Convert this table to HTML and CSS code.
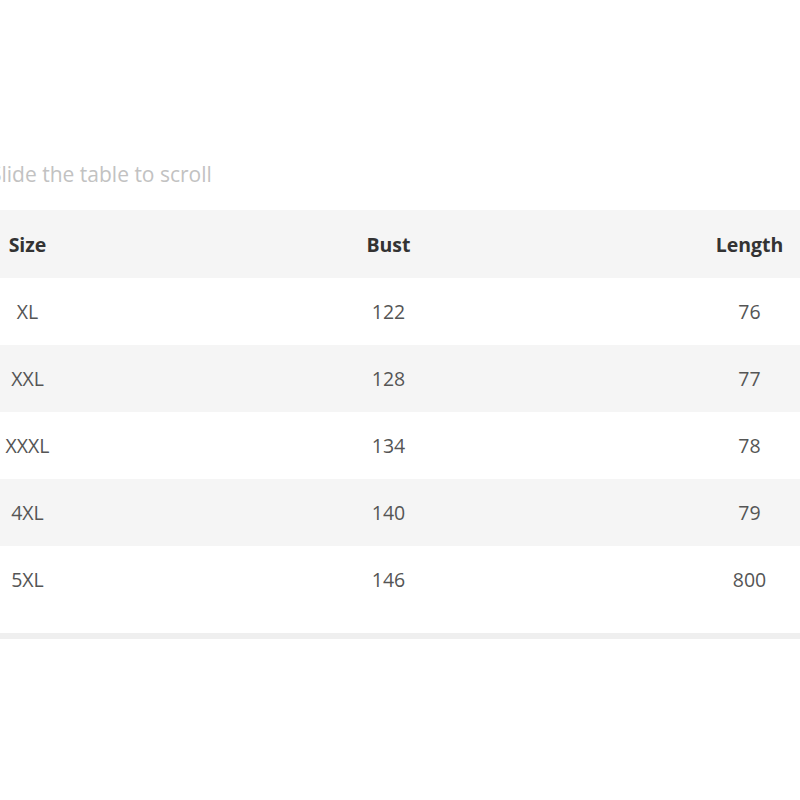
FILE: index.html
```html
<!DOCTYPE html>
<html lang="en">
<head>
<meta charset="utf-8">
<title>Size table</title>
<link rel="stylesheet" href="styles.css">
</head>
<body>
<div class="page">
  <p class="hint">Slide the table to scroll</p>
  <div class="scroller">
    <div class="table">
      <div class="row head"><div>Size</div><div>Bust</div><div>Length</div></div>
      <div class="row"><div>XL</div><div>122</div><div>76</div></div>
      <div class="row alt"><div>XXL</div><div>128</div><div>77</div></div>
      <div class="row"><div>XXXL</div><div>134</div><div>78</div></div>
      <div class="row alt"><div>4XL</div><div>140</div><div>79</div></div>
      <div class="row"><div>5XL</div><div>146</div><div>800</div></div>
    </div>
    <div class="track"></div>
  </div>
</div>
</body>
</html>
```
FILE: styles.css
```css
html, body {
  margin: 0;
  padding: 0;
  background: #fff;
  overflow: hidden;
}
.page {
  width: 800px;
  height: 800px;
  overflow: hidden;
  padding-top: 160px;
  box-sizing: border-box;
  font-family: "Open Sans", "Noto Sans", sans-serif;
}
.hint {
  margin: 0 0 22px -10px;
  font-size: 21px;
  line-height: 28px;
  color: #c2c2c2;
  white-space: nowrap;
}
.scroller {
  width: 800px;
  overflow: hidden;
}
.table {
  width: 1083px;
  margin-left: -153px;
  padding-bottom: 20px;
}
.row {
  display: grid;
  grid-template-columns: repeat(3, 1fr);
  height: 67px;
  align-items: center;
  text-align: center;
  font-size: 19.5px;
  color: #555;
}
.row.head {
  height: 68px;
  background: #f5f5f5;
  font-weight: 700;
  color: #333;
}
.row.alt {
  background: #f5f5f5;
}
.track {
  height: 6px;
  background: #efefef;
}
```
